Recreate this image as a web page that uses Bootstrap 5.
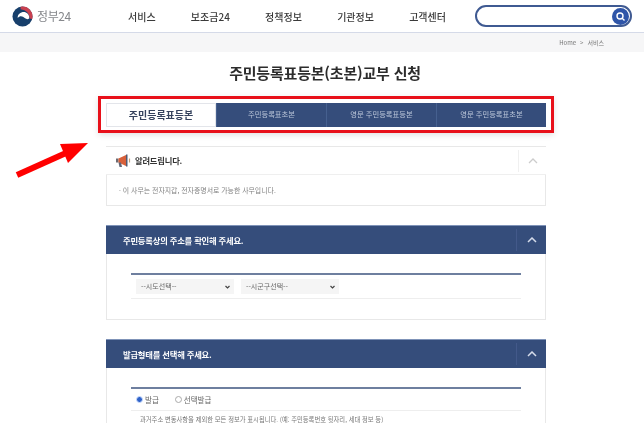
<!DOCTYPE html>
<html lang="ko">
<head>
    <meta charset="UTF-8">
    <meta name="viewport" content="width=device-width, initial-scale=1">
    <title>주민등록표등본(초본)교부 신청</title>
    <link href="https://cdn.jsdelivr.net/npm/bootstrap@5.3.0/dist/css/bootstrap.min.css" rel="stylesheet">
    <style>
        html, body {
            height: 423px;
            overflow: hidden;
            background: #fff;
        }
        body {
            position: relative;
            color: #333;
            font-family: "Noto Sans CJK KR", "Noto Sans", sans-serif;
            filter: blur(.35px);
        }
        .top-bar {
            height: 33px;
            padding-left: 12px;
            border-bottom: 1px solid #d5dae8;
            box-shadow: 0 1px 2px rgba(120, 130, 160, .25);
        }
        .logo-box {
            width: 62px;
            color: #85878b;
            font-size: 12px;
            letter-spacing: -.4px;
            white-space: nowrap;
        }
        .top-menu {
            width: 318px;
            margin-left: 54px;
            font-size: 10px;
            font-weight: 500;
            color: #3a3a3a;
        }
        .search-box {
            width: 157px;
            height: 22px;
            margin-left: 29px;
            padding-right: 1px;
            border: 2px solid #3f5a92;
            border-radius: 11px;
        }
        .search-btn {
            width: 17px;
            height: 17px;
            border-radius: 50%;
            background: #2f55a8;
        }
        .crumb-band {
            height: 19px;
            padding-right: 40px;
            background: #f6f6f7;
            color: #777;
            font-size: 6px;
        }
        .page-title {
            margin: 10px 0 12px;
            padding-left: 6px;
            font-size: 15px;
            line-height: 22px;
            font-weight: 700;
            letter-spacing: -.2px;
            color: #2c2c2c;
        }
        .red-frame {
            width: 456px;
            height: 37px;
            margin: 0 0 13px 98px;
            padding: 4px 5px 3px 5px;
            border: 3px solid #e8101a;
            box-shadow: 0 2px 6px rgba(0, 0, 0, .12);
        }
        .tab-cell {
            flex: 1 1 0;
            padding-bottom: 2px;
            border-left: 1px solid #46608f;
            background: #354d7b;
            color: #bcc7da;
            font-size: 7.3px;
        }
        .tab-cell.on {
            flex: 0 0 110px;
            border: 1px solid #e3e5ea;
            background: #fff;
            color: #36435e;
            font-size: 10px;
            font-weight: 700;
        }
        .info-panel {
            width: 440px;
            margin: 0 0 19px 106px;
            border: 1px solid #e8e8e8;
            border-top: 0;
        }
        .panel-head {
            height: 29px;
            margin: 0 -1px;
            padding-left: 17px;
            background: #354d7b;
            border-top: 1px solid #7f93b8;
            color: #fff;
            font-size: 8.3px;
            font-weight: 700;
            letter-spacing: -.2px;
        }
        .panel-head.plain {
            padding-left: 10px;
            background: #fff;
            border-top: 1px solid #e8e8e8;
            border-bottom: 1px solid #efefef;
            color: #333;
        }
        .fold-btn {
            width: 30px;
            height: 22px;
            border-left: 1px solid #43598a;
        }
        .plain .fold-btn {
            width: 28px;
            border-left-color: #f0f0f0;
        }
        .notice-body {
            height: 30px;
            padding-left: 12px;
            color: #808080;
            font-size: 6.9px;
        }
        .form-area {
            margin: 19px 24px 0;
            border-top: 2px solid #6e7f9f;
        }
        .field-row {
            height: 24px;
            gap: 7px;
            padding-left: 5px;
            border-bottom: 1px solid #eee;
        }
        .field-row.short-row {
            height: 22px;
            gap: 16px;
        }
        .fake-select {
            width: 98px;
            height: 15px;
            padding: 0 4px 0 5px;
            background: #f5f5f5;
            color: #666;
            font-size: 7px;
        }
        .radio-label {
            color: #666;
            font-size: 7.5px;
        }
        .radio-dot {
            width: 7px;
            height: 7px;
            margin-right: 2px;
            border: 1px solid #aaa;
            border-radius: 50%;
        }
        .radio-dot.on {
            border: 1px solid #cfe0ff;
            background: #2f62c8;
        }
        .desc-line {
            margin-top: 5px;
            padding-left: 9px;
            color: #777;
            font-size: 6.3px;
            line-height: 7px;
            white-space: nowrap;
        }
        .red-arrow {
            position: absolute;
            left: 14px;
            top: 141px;
        }
    </style>
</head>
<body>
    <header class="top-bar d-flex align-items-center">
        <div class="logo-box d-flex align-items-center gap-1">
            <svg class="flex-shrink-0" width="21" height="21" viewBox="0 0 22 22">
                <circle cx="11" cy="11" r="10.5" fill="#173f6b"/>
                <path d="M9 .7a10.500 10.500 0 0 1 12.500 10.800c0 .8-.1 1.500-.3 2.200L18.500 13C18.500 8 15 4 9 3.300z" fill="#c9404f"/>
                <path d="M6 12.500C5.500 8.500 10 5.500 14 6.500 17 7.500 18.500 10.500 18 13 15.500 15 13.500 12.500 11.500 11.300 9.500 10.200 7.500 10.800 6 12.500z" fill="#fff"/>
            </svg>
            <span>정부24</span>
        </div>
        <nav class="top-menu d-flex justify-content-between">
            <span>서비스</span>
            <span>보조금24</span>
            <span>정책정보</span>
            <span>기관정보</span>
            <span>고객센터</span>
        </nav>
        <div class="search-box d-flex align-items-center justify-content-end">
            <div class="search-btn d-flex align-items-center justify-content-center">
                <svg width="11" height="11" viewBox="0 0 11 11" fill="none" stroke="#fff" stroke-width="1.4">
                    <circle cx="5" cy="5" r="3"/>
                    <path d="M7.2 7.2 9.500 9.500"/>
                </svg>
            </div>
        </div>
    </header>

    <div class="crumb-band d-flex align-items-center justify-content-end gap-1">
        <span>Home</span><span>&gt;</span><span>서비스</span>
    </div>

    <h1 class="page-title text-center">주민등록표등본(초본)교부 신청</h1>

    <div class="red-frame">
        <div class="d-flex h-100 text-center">
            <div class="tab-cell on d-flex align-items-center justify-content-center">주민등록표등본</div>
            <div class="tab-cell d-flex align-items-center justify-content-center">주민등록표초본</div>
            <div class="tab-cell d-flex align-items-center justify-content-center">영문 주민등록표등본</div>
            <div class="tab-cell d-flex align-items-center justify-content-center">영문 주민등록표초본</div>
        </div>
    </div>

    <section class="info-panel">
        <div class="panel-head plain d-flex align-items-center justify-content-between">
            <div class="d-flex align-items-center gap-1">
                <svg width="15" height="14" viewBox="0 0 15 14">
                    <path d="M0 4.500h2.500v4H0z" fill="#6d6a70"/>
                    <path d="M2.500 4.500 10 1v11L2.500 8.500z" fill="#d8603a"/>
                    <path d="M10 .5h1.500v12H10z" fill="#4f5a72"/>
                    <path d="M2.500 8.500h2.500l1 4.500H3.500z" fill="#5f6678"/>
                    <path d="M13.500 4.500v4" stroke="#c9a27a" stroke-width="1.200"/>
                </svg>
                <span>알려드립니다.</span>
            </div>
            <div class="fold-btn d-flex align-items-center justify-content-center">
                <svg width="10" height="6" viewBox="0 0 10 6" fill="none" stroke="#ccc" stroke-width="1.300"><path d="M1 5 5 1l4 4"/></svg>
            </div>
        </div>
        <div class="notice-body d-flex align-items-center">· 이 사무는 전자지갑, 전자증명서로 가능한 사무입니다.</div>
    </section>

    <section class="info-panel">
        <div class="panel-head d-flex align-items-center justify-content-between">
            <span>주민등록상의 주소를 확인해 주세요.</span>
            <div class="fold-btn d-flex align-items-center justify-content-center">
                <svg width="10" height="6" viewBox="0 0 10 6" fill="none" stroke="#d5dcea" stroke-width="1.500"><path d="M1 5 5 1l4 4"/></svg>
            </div>
        </div>
        <div class="form-area mb-3 pb-1">
            <div class="field-row d-flex align-items-center">
                <div class="fake-select d-flex align-items-center justify-content-between">
                    <span>--시도선택--</span>
                    <svg width="5" height="4" viewBox="0 0 5 4" fill="none" stroke="#444" stroke-width="1.200"><path d="M.5 1 2.500 3l2-2"/></svg>
                </div>
                <div class="fake-select d-flex align-items-center justify-content-between">
                    <span>--시군구선택--</span>
                    <svg width="5" height="4" viewBox="0 0 5 4" fill="none" stroke="#444" stroke-width="1.200"><path d="M.5 1 2.500 3l2-2"/></svg>
                </div>
            </div>
        </div>
    </section>

    <section class="info-panel">
        <div class="panel-head d-flex align-items-center justify-content-between">
            <span>발급형태를 선택해 주세요.</span>
            <div class="fold-btn d-flex align-items-center justify-content-center">
                <svg width="10" height="6" viewBox="0 0 10 6" fill="none" stroke="#d5dcea" stroke-width="1.500"><path d="M1 5 5 1l4 4"/></svg>
            </div>
        </div>
        <div class="form-area">
            <div class="field-row short-row d-flex align-items-center">
                <span class="radio-label d-flex align-items-center"><span class="radio-dot on"></span>발급</span>
                <span class="radio-label d-flex align-items-center"><span class="radio-dot"></span>선택발급</span>
            </div>
            <div class="desc-line">과거주소 변동사항을 제외한 모든 정보가 표시됩니다. (예: 주민등록번호 뒷자리, 세대 정보 등)</div>
        </div>
    </section>

    <svg class="red-arrow" width="76" height="40" viewBox="0 0 76 40">
        <path d="M3 34 52 12" stroke="#f00" stroke-width="6" fill="none"/>
        <path d="M74 2 46 3 54 22z" fill="#f00"/>
    </svg>
</body>
</html>
